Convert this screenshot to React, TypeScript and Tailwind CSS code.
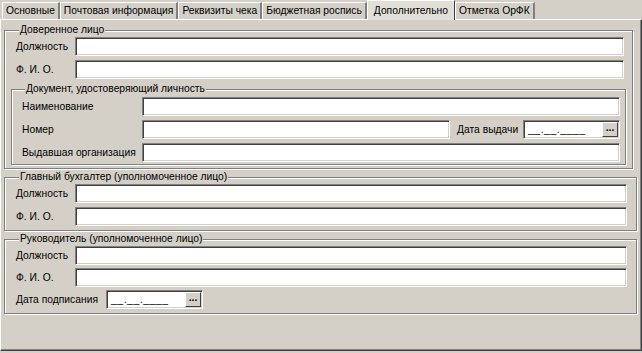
import type { ReactNode } from 'react';

const tabs = ['Основные', 'Почтовая информация', 'Реквизиты чека', 'Бюджетная роспись', 'Дополнительно', 'Отметка ОрФК'];
const ACTIVE = 4;

// sunken win32 edit box
function Edit({ className = '' }: { className?: string }) {
  return (
    <div
      className={`h-[19px] bg-white border border-t-[#808080] border-l-[#808080] border-b-white border-r-white shadow-[inset_1px_1px_0_#404040,inset_-1px_-1px_0_#d4d0c8] ${className}`}
    />
  );
}

function DateEdit({ className = '' }: { className?: string }) {
  return (
    <div
      className={`flex h-[19px] items-center bg-white border border-t-[#808080] border-l-[#808080] border-b-white border-r-white shadow-[inset_1px_1px_0_#404040,inset_-1px_-1px_0_#d4d0c8] ${className}`}
    >
      <span className="flex-1 pl-[4px] text-[10.5px] leading-[11px] tracking-[0.5px]">__.__.____</span>
      <div className="mr-[1px] flex h-[15px] w-[16px] items-center justify-center bg-[#d4d0c8] border border-t-white border-l-white border-b-[#404040] border-r-[#404040] text-[10px] leading-[8px] font-bold">
        <span className="-mt-[4px]">...</span>
      </div>
    </div>
  );
}

function Group({ title, children, className = '' }: { title: string; children: ReactNode; className?: string }) {
  return (
    <fieldset
      className={`border border-[#808080] shadow-[inset_1px_1px_0_#fff,1px_1px_0_#fff] ${className}`}
    >
      <legend className="ml-[3px] bg-[#d4d0c8] px-[1px] text-[10.3px] leading-[12px] whitespace-nowrap">{title}</legend>
      {children}
    </fieldset>
  );
}

function Row({ label, labelW, children }: { label: string; labelW: string; children: ReactNode }) {
  return (
    <div className="flex h-[19px] items-center">
      <span className={`${labelW} shrink-0 whitespace-nowrap text-[10.3px]`}>{label}</span>
      {children}
    </div>
  );
}

export default function App() {
  return (
    <div
      className="h-[353px] w-[642px] overflow-hidden bg-[#d4d0c8] text-black"
      style={{ fontFamily: '"Liberation Sans", Arial, sans-serif' }}
    >
      {/* Tabs */}
      <div className="flex h-[19px] items-end pl-[2px]">
        {tabs.map((t, i) =>
          i === ACTIVE ? (
            <div
              key={t}
              className="relative z-10 -mb-[1px] flex h-[20px] items-center whitespace-nowrap border-t border-l border-t-white border-l-white border-r border-r-[#404040] bg-[#e2dfd8] px-[6px] text-[10.3px]"
            >
              {t}
            </div>
          ) : (
            <div
              key={t}
              className="flex h-[17px] items-center whitespace-nowrap border-t border-l border-t-white border-l-white border-r-2 border-r-[#808080] px-[3px] text-[10.3px]"
            >
              {t}
            </div>
          ),
        )}
      </div>

      {/* Panel */}
      <div className="flex h-[332px] flex-col gap-[2px] border border-t-white border-l-white border-b-[#404040] border-r-[#404040] pl-[3px] pr-[3px] pt-[4px] shadow-[inset_-1px_-1px_0_#808080]">
        <Group title="Доверенное лицо" className="mr-[5px] pl-[11px] pr-[8px] pb-[3px]">
          <div className="flex flex-col gap-[4px] pt-[1px]">
            <Row label="Должность" labelW="w-[59px]">
              <Edit className="flex-1" />
            </Row>
            <Row label="Ф. И. О." labelW="w-[59px]">
              <Edit className="flex-1" />
            </Row>
          </div>
          <Group title="Документ, удостоверяющий личность" className="-ml-[5px] -mr-[2px] mt-[4px] pl-[10px] pr-[5px] pb-[2px]">
            <div className="flex flex-col gap-[4px] pt-[2px]">
              <Row label="Наименование" labelW="w-[120px]">
                <Edit className="flex-1" />
              </Row>
              <Row label="Номер" labelW="w-[120px]">
                <Edit className="flex-1" />
                <span className="ml-[7px] w-[66px] shrink-0 whitespace-nowrap text-[10.3px]">Дата выдачи</span>
                <DateEdit className="w-[97px]" />
              </Row>
              <Row label="Выдавшая организация" labelW="w-[120px]">
                <Edit className="flex-1" />
              </Row>
            </div>
          </Group>
        </Group>

        <Group title="Главный бухгалтер (уполномоченное лицо)" className="mr-[1px] pl-[11px] pr-[9px] pb-[4px]">
          <div className="flex flex-col gap-[4px] pt-[1px]">
            <Row label="Должность" labelW="w-[59px]">
              <Edit className="flex-1" />
            </Row>
            <Row label="Ф. И. О." labelW="w-[59px]">
              <Edit className="flex-1" />
            </Row>
          </div>
        </Group>

        <Group title="Руководитель (уполномоченное лицо)" className="mr-[1px] pl-[11px] pr-[9px] pb-[4px]">
          <div className="flex flex-col gap-[3px] pt-[1px]">
            <Row label="Должность" labelW="w-[59px]">
              <Edit className="flex-1" />
            </Row>
            <Row label="Ф. И. О." labelW="w-[59px]">
              <Edit className="flex-1" />
            </Row>
            <Row label="Дата подписания" labelW="w-[90px]">
              <DateEdit className="w-[97px]" />
            </Row>
          </div>
        </Group>
      </div>
    </div>
  );
}
